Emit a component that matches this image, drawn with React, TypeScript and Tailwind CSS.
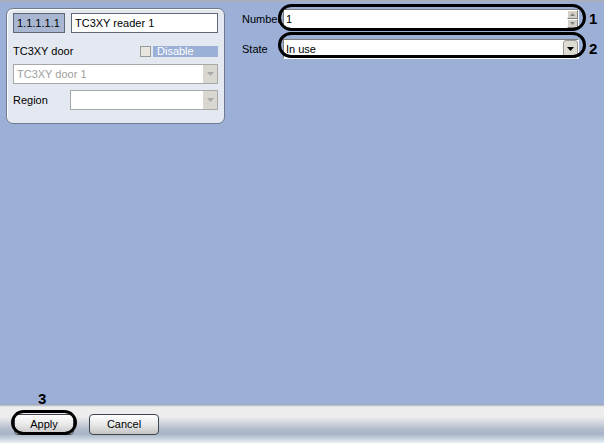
function Arrow({ disabled }: { disabled?: boolean }) {
  return (
    <div className={`flex h-full w-[15px] items-center justify-center border-l border-white ${disabled ? 'bg-[#d9d7cf]' : 'bg-[#d4d0c8]'}`}>
      <svg width="7" height="4" viewBox="0 0 7 4"><path d="M0 0h7L3.5 4z" fill={disabled ? '#a8a8a8' : '#000'} /></svg>
    </div>
  );
}

function Oval({ className }: { className: string }) {
  return <div className={`pointer-events-none absolute rounded-full border-[3px] border-black ${className}`} />;
}

const button = 'h-[21px] rounded-[4px] border border-[#3f4550] bg-[linear-gradient(to_bottom,#ffffff,#e8e8e8_50%,#c4c4c4)] text-[11px]';

export default function App() {
  return (
    <div className="relative flex h-[443px] w-[604px] flex-col overflow-hidden bg-[#9bafd7] text-[11px] text-black" style={{ fontFamily: '"Liberation Sans", Arial, sans-serif' }}>
      <div className="h-[2px] bg-[#a7afbe]" />
      <div className="flex flex-1 items-start">
        <section className="ml-[6px] mt-[6px] h-[116px] w-[219px] rounded-[7px] border border-[#6f7a8c] bg-[#e4e8f0] px-[6px] pt-[4px] shadow-[inset_1px_1px_0_#fff]">
          <div className="flex gap-[6px]">
            <div className="flex h-[20px] w-[52px] items-center border border-[#5f6877] bg-[#a8b6d2] px-[3px]">1.1.1.1.1</div>
            <div className="flex h-[20px] flex-1 items-center border border-[#5f6877] bg-white px-[3px]">TC3XY reader 1</div>
          </div>
          <div className="mt-[13px] flex h-[11px] items-center">
            <span className="flex-1">TC3XY door</span>
            <span className="mr-[2px] h-[11px] w-[11px] border border-[#9a9a9a] bg-[#e7e5de]" />
            <span className="flex h-[11px] w-[65px] items-center bg-[#9bb0d6] pl-[4px] text-white">Disable</span>
          </div>
          <div className="mt-[7px] flex h-[20px] items-center border border-[#a8a8a8] bg-white">
            <span className="flex-1 px-[3px] text-[#a0a0a0]">TC3XY door 1</span>
            <Arrow disabled />
          </div>
          <div className="mt-[6px] flex items-center">
            <span className="w-[57px]">Region</span>
            <div className="flex h-[20px] flex-1 items-center border border-[#a8a8a8] bg-white">
              <span className="flex-1" />
              <Arrow disabled />
            </div>
          </div>
        </section>

        <div className="ml-[17px] mt-[6px] flex flex-col gap-[7px]">
          <div className="flex items-center">
            <span className="w-[41px]">Number</span>
            <div className="flex h-[20px] w-[296px] items-center border border-[#7f7f7f] border-r-[#fff] border-b-[#fff] bg-white">
              <span className="flex-1 px-[2px]">1</span>
              <div className="flex h-full w-[11px] flex-col">
                <div className="flex flex-1 items-center justify-center border border-[#ffffff] border-r-[#808080] border-b-[#808080] bg-[#d4d0c8]">
                  <svg width="5" height="3" viewBox="0 0 5 3"><path d="M2.5 0L5 3H0z" fill="#808080" /></svg>
                </div>
                <div className="flex flex-1 items-center justify-center border border-[#ffffff] border-r-[#808080] border-b-[#808080] bg-[#d4d0c8]">
                  <svg width="5" height="3" viewBox="0 0 5 3"><path d="M0 0h5L2.5 3z" fill="#808080" /></svg>
                </div>
              </div>
            </div>
            <span className="ml-[10px] text-[15px] font-bold">1</span>
          </div>
          <div className="flex items-center">
            <span className="w-[41px]">State</span>
            <div className="flex h-[20px] w-[296px] items-center border border-[#7f7f7f] border-r-[#fff] border-b-[#fff] bg-white">
              <span className="flex-1 px-[2px]">In use</span>
              <div className="flex h-full w-[15px] items-center justify-center rounded-[3px] border border-[#9a9a9a] bg-[#dedbd2]">
                <svg width="7" height="4" viewBox="0 0 7 4"><path d="M0 0h7L3.5 4z" fill="#000" /></svg>
              </div>
            </div>
            <span className="ml-[10px] text-[15px] font-bold">2</span>
          </div>
        </div>
      </div>

      <div className="flex h-[39px] items-center gap-[15px] bg-[linear-gradient(to_bottom,#8f9aae_0px,#eeeeee_3px,#ececec_13px,#b3bccc_25px,#a7b3c7_30px,#e8f0f3_39px)] pl-[14px] pt-[1px]">
        <button type="button" className={`${button} w-[60px]`}>Apply</button>
        <button type="button" className={`${button} w-[70px]`}>Cancel</button>
      </div>
      <span className="absolute left-[38px] top-[388px] text-[15px] font-bold">3</span>

      <Oval className="left-[278px] top-[4px] h-[27px] w-[308px]" />
      <Oval className="left-[278px] top-[32px] h-[26px] w-[308px]" />
      <Oval className="left-[11px] top-[410px] h-[25px] w-[66px]" />
    </div>
  );
}
